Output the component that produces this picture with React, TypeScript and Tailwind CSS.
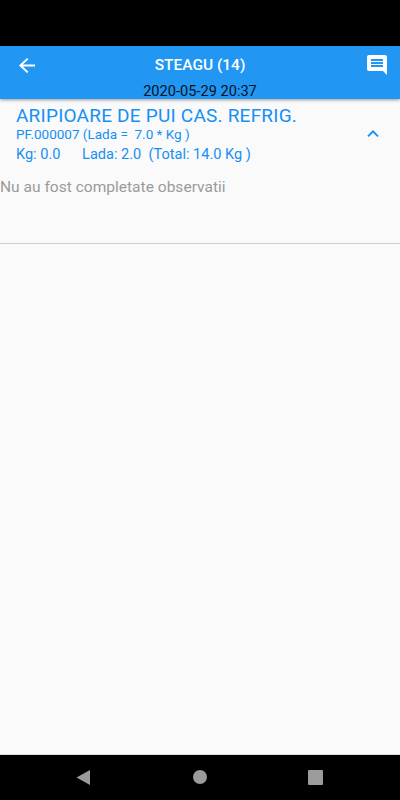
import React from 'react';

function AppBar() {
  return (
    <header className="relative h-[53px] bg-[#2196f3] shadow-[0_1px_3px_rgba(0,0,0,0.4)]">
      <div className="flex h-[38px] items-center justify-between pl-[19px] pr-[13px]">
        <svg viewBox="4 4 16 16" className="mt-px h-[15px] w-4 text-white" preserveAspectRatio="none" fill="currentColor">
          <path d="M20 11H7.83l5.59-5.59L12 4l-8 8 8 8 1.41-1.41L7.83 13H20v-2z" />
        </svg>
        <svg viewBox="2 2 20 20" className="h-5 w-5 text-white" fill="currentColor">
          <path d="M21.99 4c0-1.1-.89-2-1.99-2H4c-1.1 0-2 .9-2 2v12c0 1.1.9 2 2 2h14l4 4-.01-18zM18 14H6v-2h12v2zm0-3H6V9h12v2zm0-3H6V6h12v2z" />
        </svg>
      </div>
      <h1 className="absolute inset-x-0 top-[10px] text-center text-[15.5px] font-medium leading-[18px] text-white">STEAGU (14)</h1>
      <p className="h-[15px] text-center text-[14.6px] leading-[15px] text-[#06121d]">2020-05-29 20:37</p>
    </header>
  );
}

export default function App() {
  return (
    <div className="flex h-[800px] w-[400px] flex-col overflow-hidden bg-[#fafafa] font-['Roboto',sans-serif]">
      <div className="h-[46px] shrink-0 bg-black" />
      <AppBar />
      <main className="flex-1 border-b border-[#dcdcdc]">
        <section className="h-[145px] border-b border-[#d0d0d0]">
          <div className="flex h-[68px] items-start justify-between whitespace-pre pl-4 pr-[21px] text-[#1590f3]">
            <div className="pt-[7px]">
              <h2 className="text-[19px] leading-[20px] tracking-[0.22px]">ARIPIOARE DE PUI CAS. REFRIG.</h2>
              <p className="text-[13.5px] leading-[16px]">PF.000007 (Lada =  7.0 * Kg )</p>
              <p className="mt-1 text-[14.55px] leading-[18px]">Kg: 0.0      Lada: 2.0  (Total: 14.0 Kg )</p>
            </div>
            <svg viewBox="6 8 12 7.4" className="mt-[31px] h-[7px] w-3" fill="currentColor">
              <path d="M12 8l-6 6 1.41 1.41L12 10.83l4.59 4.58L18 14z" />
            </svg>
          </div>
          <p className="mt-[11px] text-[15.55px] leading-[18px] text-[#9a9a9a]">Nu au fost completate observatii</p>
        </section>
      </main>
      <nav className="flex h-[45px] shrink-0 items-center justify-between bg-black pl-[76px] pr-[77px] text-[#9b9b9b]">
        <svg viewBox="0 0 15 16" className="h-4 w-[15px]" fill="currentColor"><path d="M.5 7.5L14 0v15z" /></svg>
        <span className="mb-px h-[14px] w-[14px] rounded-full bg-current" />
        <span className="mb-px h-[15px] w-[15px] rounded-[1px] bg-current" />
      </nav>
    </div>
  );
}
